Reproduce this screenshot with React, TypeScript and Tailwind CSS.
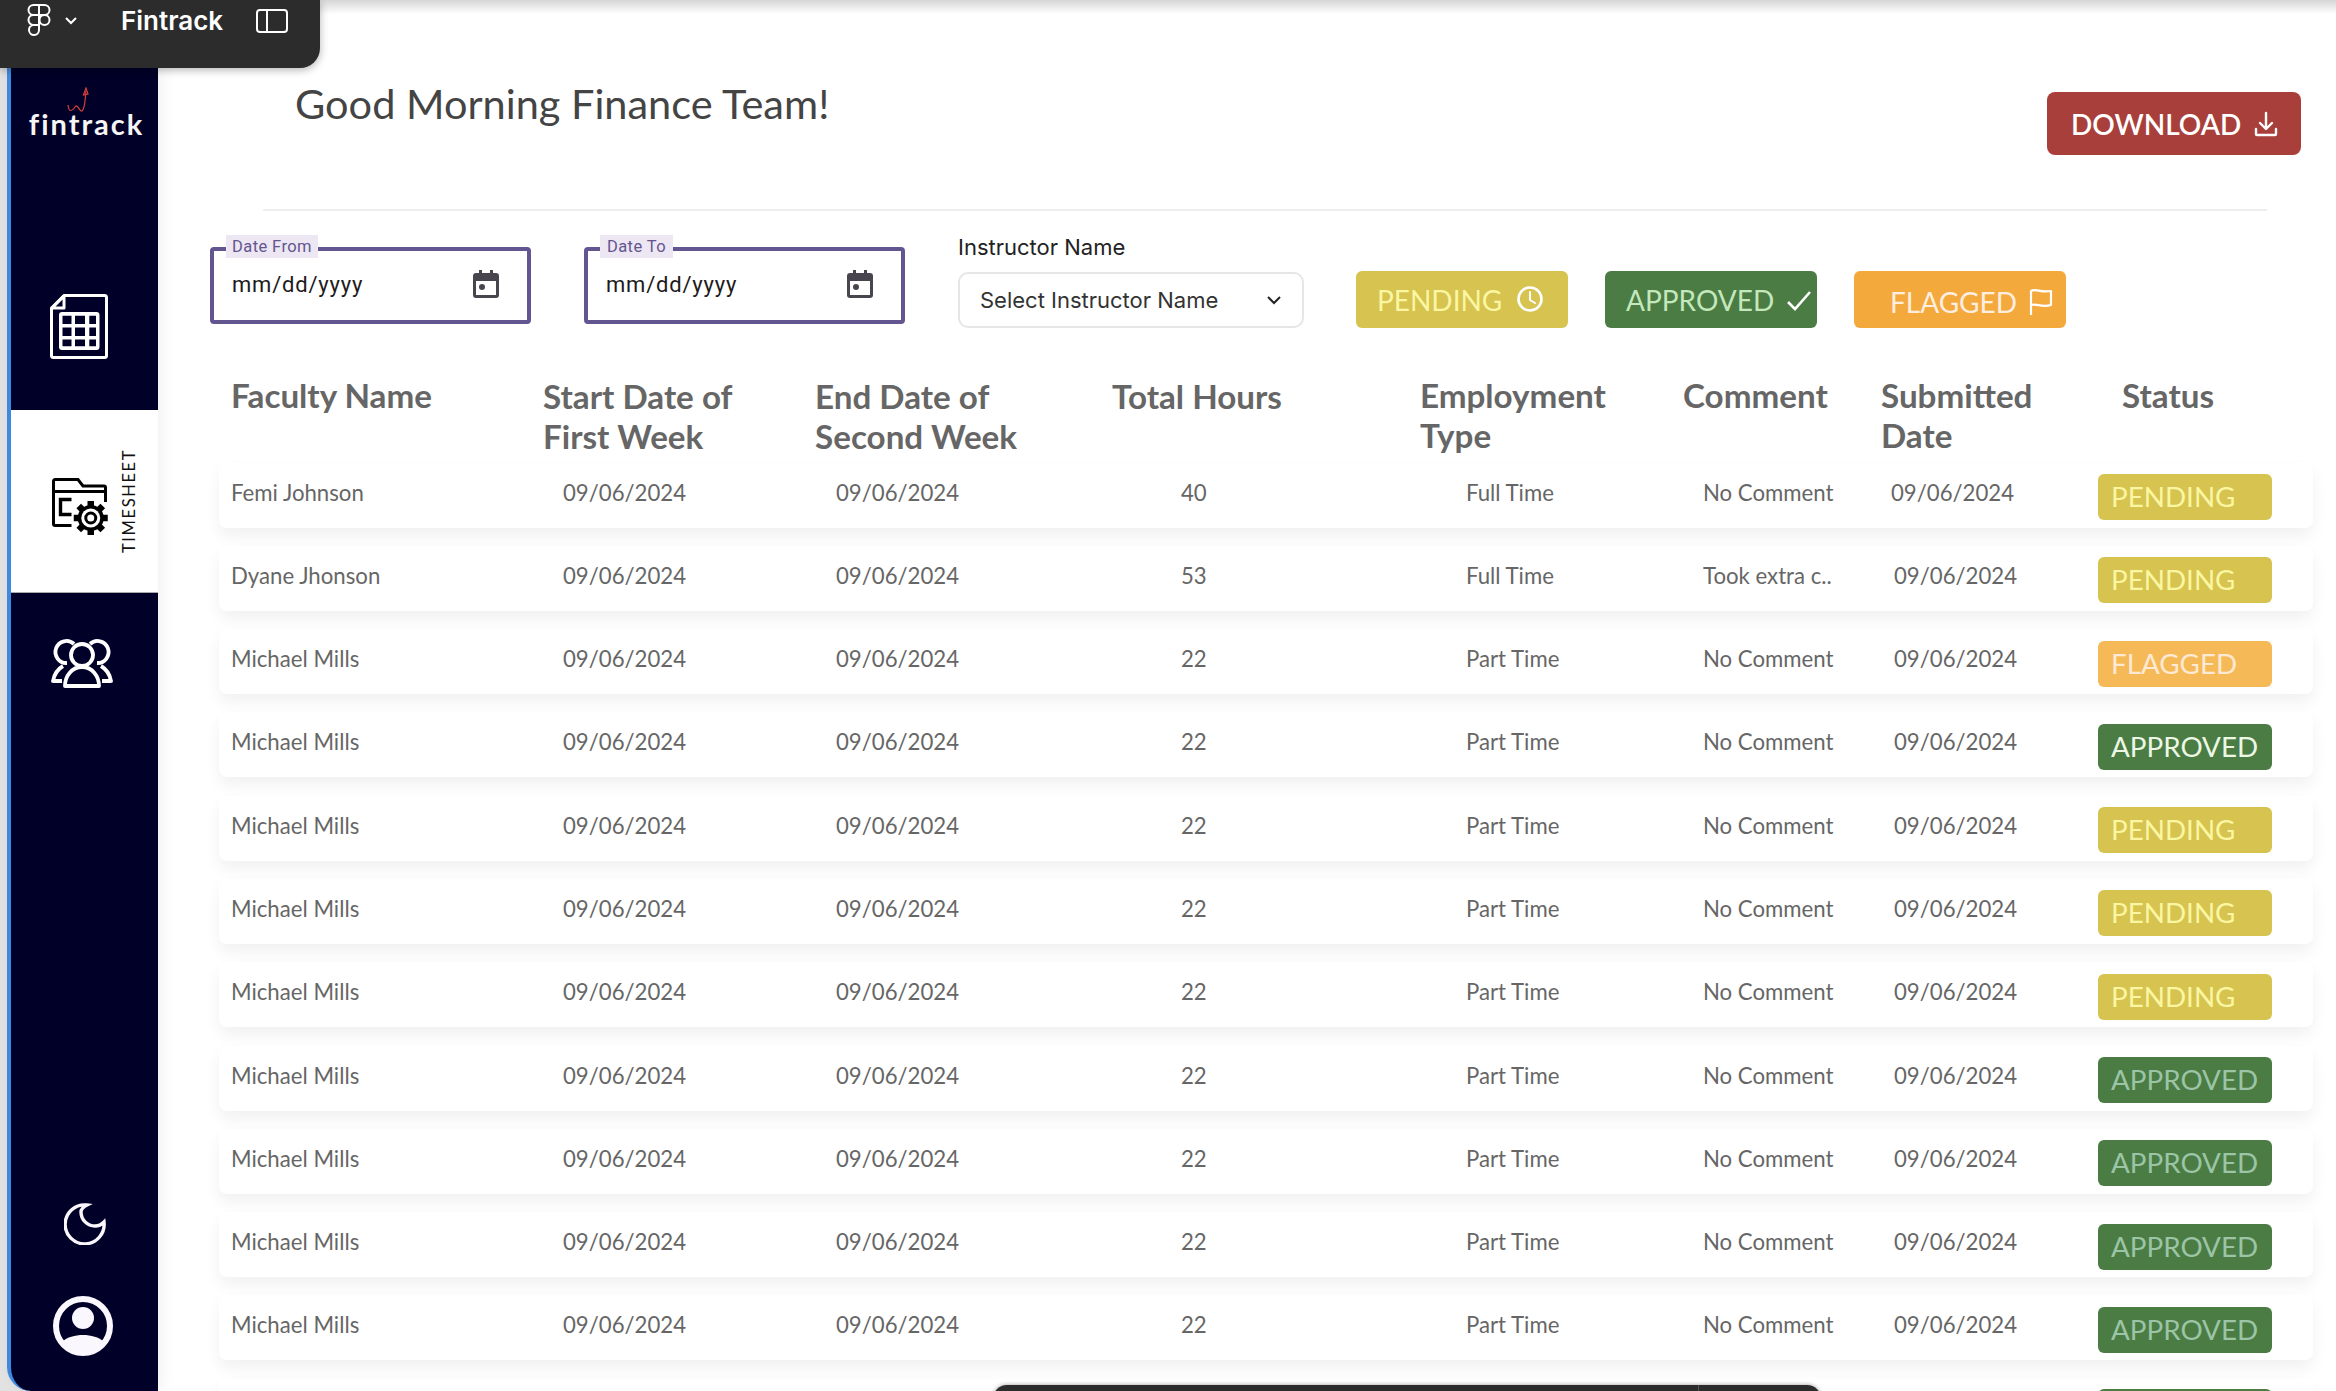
import React from "react";

type Status = "PENDING" | "FLAGGED" | "APPROVED" | "APPROVED_DIM";

const rows: { name: string; hours: string; type: string; comment: string; status: Status; dateShift?: boolean }[] = [
  { name: "Femi Johnson", hours: "40", type: "Full Time", comment: "No Comment", status: "PENDING", dateShift: true },
  { name: "Dyane Jhonson", hours: "53", type: "Full Time", comment: "Took extra c..", status: "PENDING" },
  { name: "Michael Mills", hours: "22", type: "Part Time", comment: "No Comment", status: "FLAGGED" },
  { name: "Michael Mills", hours: "22", type: "Part Time", comment: "No Comment", status: "APPROVED" },
  { name: "Michael Mills", hours: "22", type: "Part Time", comment: "No Comment", status: "PENDING" },
  { name: "Michael Mills", hours: "22", type: "Part Time", comment: "No Comment", status: "PENDING" },
  { name: "Michael Mills", hours: "22", type: "Part Time", comment: "No Comment", status: "PENDING" },
  { name: "Michael Mills", hours: "22", type: "Part Time", comment: "No Comment", status: "APPROVED_DIM" },
  { name: "Michael Mills", hours: "22", type: "Part Time", comment: "No Comment", status: "APPROVED_DIM" },
  { name: "Michael Mills", hours: "22", type: "Part Time", comment: "No Comment", status: "APPROVED_DIM" },
  { name: "Michael Mills", hours: "22", type: "Part Time", comment: "No Comment", status: "APPROVED_DIM" },
];

function Badge({ status }: { status: Status }) {
  if (status === "PENDING")
    return <span className="flex h-[46px] w-[174px] items-center rounded-[6px] bg-[#d6c350] pl-[13px] text-[27.800px] text-[#fbf6a2]">PENDING</span>;
  if (status === "FLAGGED")
    return <span className="flex h-[46px] w-[174px] items-center rounded-[6px] bg-[#f5ba57] pl-[13px] text-[27.800px] text-[#fde9d4]">FLAGGED</span>;
  if (status === "APPROVED")
    return <span className="flex h-[46px] w-[174px] items-center rounded-[6px] bg-[#4a7c43] pl-[13px] text-[27.800px] text-[#ecf7e6]">APPROVED</span>;
  return <span className="flex h-[46px] w-[174px] items-center rounded-[6px] bg-[#4a7c43] pl-[13px] text-[27.800px] text-[#9cc4a6]">APPROVED</span>;
}

function DateField({ label, labelWidth }: { label: string; labelWidth: string }) {
  return (
    <div className="relative flex h-[77px] w-[321px] items-center justify-between rounded-[4px] border-[4px] border-[#635690] pb-[3px] pl-[18px] pr-[28px]">
      <span className={`absolute left-[12px] top-[-16px] h-[23px] bg-[#ece7f3] text-center font-['Roboto',sans-serif] text-[16.500px] leading-[23px] tracking-[0.4px] text-[#65558f] ${labelWidth}`}>{label}</span>
      <span className="font-['Roboto',sans-serif] text-[22px] tracking-[0.8px] text-[#1d1b20]">mm/dd/yyyy</span>
      <svg width="26" height="28" viewBox="0 0 26 28" fill="#49454f">
        <path d="M6 0h3v3h8V0h3v3h3a3 3 0 0 1 3 3v19a3 3 0 0 1-3 3H3a3 3 0 0 1-3-3V6a3 3 0 0 1 3-3h3zM3 11v14h20V11z" />
        <circle cx="9" cy="17" r="3" />
      </svg>
    </div>
  );
}

function Sidebar() {
  const teeth = [0, 45, 90, 135, 180, 225, 270, 315];
  return (
    <aside className="flex h-full w-[158px] shrink-0 bg-[#e2e2e2] pl-[7px]">
      <div className="flex h-full w-[151px] flex-col rounded-bl-[24px] border-l-[4px] border-[#3f8ae0] bg-[#000028] shadow-[4px_0_16px_rgba(0,0,0,0.06)]">
        <div className="flex h-[270px] shrink-0 flex-col items-center pl-[4px] pt-[87px] text-white">
          <svg width="22" height="26" viewBox="0 0 22 26" fill="none" stroke="#d8403a" strokeWidth="1.200" className="mb-[-6px] ml-[-18px]">
            <path d="M1 18c1 8 4 6 7 2s4 5 7 4c3-2 3-10 4-20" />
            <path d="M16.500 8 19 1l2 6z" />
          </svg>
          <span className="font-['Lato',sans-serif] text-[29px] font-bold leading-[34px] tracking-[2px] text-[#f5f5f5]">fintrack</span>
        </div>

        <div className="flex h-[140px] shrink-0 items-start pl-[39px] pt-[24px]">
          <svg width="58" height="65" viewBox="0 0 58 65" fill="none" stroke="#fff" strokeWidth="3">
            <path d="M14 1.500h40.500a2 2 0 0 1 2 2V61.500a2 2 0 0 1-2 2H3.500a2 2 0 0 1-2-2V14z" strokeLinejoin="round" />
            <path d="M14 2 2 14h12z" strokeLinejoin="round" />
            <path
              fill="#fff"
              stroke="none"
              fillRule="evenodd"
              d="M12 18h34.500a3 3 0 0 1 3 3v32a3 3 0 0 1-3 3H12a3 3 0 0 1-3-3V21a3 3 0 0 1 3-3zM12.500 21.800V30h9v-8.200zM25 21.800V30h10v-8.200zM39.300 21.800V30H46v-8.200zM12.500 33.600V42h9v-8.400zM25 33.600V42h10v-8.400zM39.300 33.600V42H46v-8.400zM12.500 45.500v6.800h9v-6.800zM25 45.500v6.800h10v-6.800zM39.300 45.500v6.800H46v-6.800z"
            />
          </svg>
        </div>

        <div className="flex h-[182px] shrink-0 items-center justify-start gap-[9px] bg-white pl-[41px]">
          <svg width="56" height="58" viewBox="0 0 56 58" fill="none" className="mt-[12px]">
            <path d="M19.500 47.500H3a1.500 1.500 0 0 1-1.500-1.500V3A1.500 1.500 0 0 1 3 1.500h23l5 6.500h21a1.500 1.500 0 0 1 1.500 1.500V24" stroke="#000" strokeWidth="3" />
            <path d="M2 13.500h52" stroke="#000" strokeWidth="3.200" />
            <path d="M19.500 21.500H8.500v15h11" stroke="#000" strokeWidth="3.400" />
            <g fill="#000">
              {teeth.map((a) => (
                <rect key={a} x="35.500" y="23" width="6.500" height="8" transform={`rotate(${a} 38.750 40)`} />
              ))}
              <circle cx="38.750" cy="40" r="13" />
            </g>
            <circle cx="38.750" cy="40" r="9.500" fill="#fff" />
            <circle cx="38.750" cy="40" r="5" stroke="#000" strokeWidth="3" />
          </svg>
          <span className="rotate-180 text-[16.500px] tracking-[1.600px] text-[#111] [writing-mode:vertical-rl]">TIMESHEET</span>
        </div>

        <div className="flex flex-1 flex-col items-center border-t border-[#aaa] pt-[43px]">
          <svg width="62" height="52" viewBox="0 0 62 52" fill="none" stroke="#fff" strokeWidth="3.800" strokeLinejoin="round" className="ml-[-6px]">
            <path d="M16 27a11 11 0 1 1 7-19" />
            <path d="M46 27a11 11 0 1 0-7-19" />
            <path d="M12 30c-5 3-9 9-10 15h9" />
            <path d="M50 30c5 3 9 9 10 15h-9" />
            <circle cx="31" cy="19" r="11" />
            <path d="M14 50c0-10 7-19 17-19s17 9 17 19z" />
          </svg>
          <div className="flex-1" />
          <svg width="42" height="42" viewBox="0 0 42 42" fill="none" className="mb-[51px]">
            <path d="M23 2a19.500 19.500 0 1 0 17 17c-3 3-6 4-9 4a14 14 0 0 1-14-14c0-3 2-5 6-7z" stroke="#fbf7ff" strokeWidth="3.400" />
          </svg>
          <svg width="62" height="60" viewBox="0 0 62 60" className="mb-[35px] ml-[-4px]">
            <circle cx="31" cy="30" r="27" fill="none" stroke="#fbf7ff" strokeWidth="6" />
            <circle cx="31" cy="22" r="11" fill="#fbf7ff" />
            <path d="M10 46c5-5 13-7 21-7s16 2 21 7c-5 7-13 11-21 11s-16-4-21-11z" fill="#fbf7ff" />
          </svg>
        </div>
      </div>
    </aside>
  );
}

const rowGrid = "grid h-[65px] shrink-0 grid-cols-[332px_273px_345px_285px_237px_191px_204px_1fr] items-start rounded-[8px] bg-white pl-[12px] text-[22.200px] leading-[60px] text-[#666] shadow-[0_8px_16px_rgba(0,0,0,0.06)]";

export default function App() {
  return (
    <div className="relative flex h-[1391px] w-[2336px] overflow-hidden bg-white font-['Lato',sans-serif]">
      <div className="absolute inset-x-0 top-0 z-10 h-[14px] bg-gradient-to-b from-[#d6d6d6] to-transparent" />

      <div className="absolute left-0 top-0 z-20 flex h-[68px] w-[320px] items-start rounded-br-[20px] bg-[#2c2c2c] pl-[27px] pt-[4px] text-white shadow-[0_2px_8px_rgba(0,0,0,0.3)]">
        <svg width="24" height="32" viewBox="0 0 24 32" fill="none" stroke="#fff" strokeWidth="2">
          <path d="M12 1H6.500a5 5 0 0 0 0 10H12zM12 1h5.500a5 5 0 0 1 0 10H12zM12 11H6.500a5 5 0 0 0 0 10H12zM12 21H6.500A5 5 0 1 0 12 26z" />
          <circle cx="17.500" cy="16" r="5" />
        </svg>
        <svg width="14" height="10" viewBox="0 0 14 10" fill="none" stroke="#fff" strokeWidth="2" className="ml-[13px] mt-[12px]">
          <path d="M2 2l5 5 5-5" />
        </svg>
        <span className="ml-[43px] mt-[-3px] font-['Inter',sans-serif] text-[26px] font-semibold leading-[40px]">Fintrack</span>
        <svg width="32" height="24" viewBox="0 0 32 24" fill="none" stroke="#fff" strokeWidth="2" className="ml-[33px] mt-[5px]">
          <rect x="1" y="1" width="30" height="22" rx="3" />
          <path d="M11 1v22" />
        </svg>
      </div>

      <Sidebar />

      <main className="min-w-0 flex-1 pl-[52px] pr-[23px]">
        <div className="flex h-[209px] items-start justify-between">
          <h1 className="ml-[85px] mt-[75px] text-[41.500px] leading-[56px] text-[#444]">Good Morning Finance Team!</h1>
          <button className="mr-[12px] mt-[92px] flex h-[63px] w-[254px] items-center justify-start gap-[13px] rounded-[8px] bg-[#a83f3b] pl-[24px] text-[28px] font-semibold text-[#fff]">
            DOWNLOAD
            <svg width="24" height="26" viewBox="0 0 24 26" fill="none" stroke="#fff" strokeWidth="2.400" strokeLinecap="round" strokeLinejoin="round">
              <path d="M12 2v15M6 12l6 6 6-6M2 18v5a1 1 0 0 0 1 1h18a1 1 0 0 0 1-1v-5" />
            </svg>
          </button>
        </div>
        <div className="ml-[53px] mr-[46px] h-[2px] bg-[#eeeeee]" />

        <div className="mt-[36px] flex items-start">
          <DateField label="Date From" labelWidth="w-[92px]" />
          <div className="ml-[53px]"><DateField label="Date To" labelWidth="w-[73px]" /></div>
          <div className="ml-[53px] mt-[-13px]">
            <div className="font-['Inter',sans-serif] text-[22px] leading-[26px] text-[#222]">Instructor Name</div>
            <div className="mt-[12px] flex h-[56px] w-[346px] items-center justify-between rounded-[10px] border-2 border-[#e6e6e6] pl-[20px] pr-[20px] font-['Inter',sans-serif] text-[22px] text-[#333]">
              Select Instructor Name
              <svg width="16" height="10" viewBox="0 0 16 10" fill="none" stroke="#222" strokeWidth="2"><path d="M2 2l6 6 6-6" /></svg>
            </div>
          </div>
          <div className="ml-[52px] mt-[24px] flex gap-[37px] text-[28px]">
            <span className="flex h-[57px] w-[212px] items-center gap-[14px] rounded-[6px] bg-[#d6c350] pl-[21px] text-[#fbf6a2]">
              PENDING
              <svg width="28" height="28" viewBox="0 0 28 28" fill="none" stroke="#fff" strokeWidth="2.600" strokeLinecap="round" className="mt-[-2px]"><circle cx="14" cy="14" r="11.500" /><path d="M14 7v8l5 3" strokeWidth="2" /></svg>
            </span>
            <span className="flex h-[57px] w-[212px] items-center gap-[13px] rounded-[6px] bg-[#4a7c43] pl-[21px] text-[#c4e7bc]">
              APPROVED
              <svg width="24" height="22" viewBox="0 0 24 22" fill="none" stroke="#fff" strokeWidth="2.600" className="mt-[3px]"><path d="M1 12l7 7L23 2" /></svg>
            </span>
            <span className="flex h-[57px] w-[212px] items-center gap-[12px] rounded-[6px] bg-[#f4a93d] pl-[36px] pt-[4px] text-[#fdeee0]">
              FLAGGED
              <svg width="24" height="28" viewBox="0 0 24 28" fill="none" stroke="#fff" strokeWidth="2.200" strokeLinejoin="round"><path d="M2 27V3c6-3 8 2 20 0v14c-10 3-14-2-20 0" /></svg>
            </span>
          </div>
        </div>

        <div className="mt-[47px] grid h-[87.500px] grid-cols-[312px_272px_297px_308px_263px_198px_241px_1fr] pl-[21px] text-[33.200px] leading-[40px] text-[#666]">
          <div className="font-bold">Faculty Name</div>
          <div className="pt-[1px] font-bold">Start Date of<br />First Week</div>
          <div className="pt-[1px] font-bold">End Date of<br />Second Week</div>
          <div className="pt-[1px] font-bold">Total Hours</div>
          <div className="font-bold">Employment<br />Type</div>
          <div className="font-bold">Comment</div>
          <div className="font-bold">Submitted<br />Date</div>
          <div className="font-bold">Status</div>
        </div>

        <div className="ml-[9px] flex flex-col gap-[18.300px]">
          {rows.map((r, i) => (
            <div key={i} className={rowGrid}>
              <div className="h-[60px]">{r.name}</div>
              <div>09/06/2024</div>
              <div>09/06/2024</div>
              <div>{r.hours}</div>
              <div>{r.type}</div>
              <div>{r.comment}</div>
              <div className={r.dateShift ? "ml-[-3px]" : ""}>09/06/2024</div>
              <div className="pt-[11.500px]"><Badge status={r.status} /></div>
            </div>
          ))}
          <div className="flex h-[65px] shrink-0 justify-end rounded-[8px] bg-white pr-[41px] pt-[10px] shadow-[0_8px_16px_rgba(0,0,0,0.06)]">
            <div className="h-[46px] w-[174px] rounded-[6px] bg-[#4a7c43]" />
          </div>
        </div>
      </main>

      <div className="absolute bottom-[-40px] left-[993px] z-20 h-[46px] w-[828px] rounded-t-[14px] bg-[#2c2c2c] shadow-[0_0_4px_rgba(0,0,0,0.4)]">
        <div className="ml-[705px] h-full w-px bg-[#555]" />
      </div>
    </div>
  );
}
